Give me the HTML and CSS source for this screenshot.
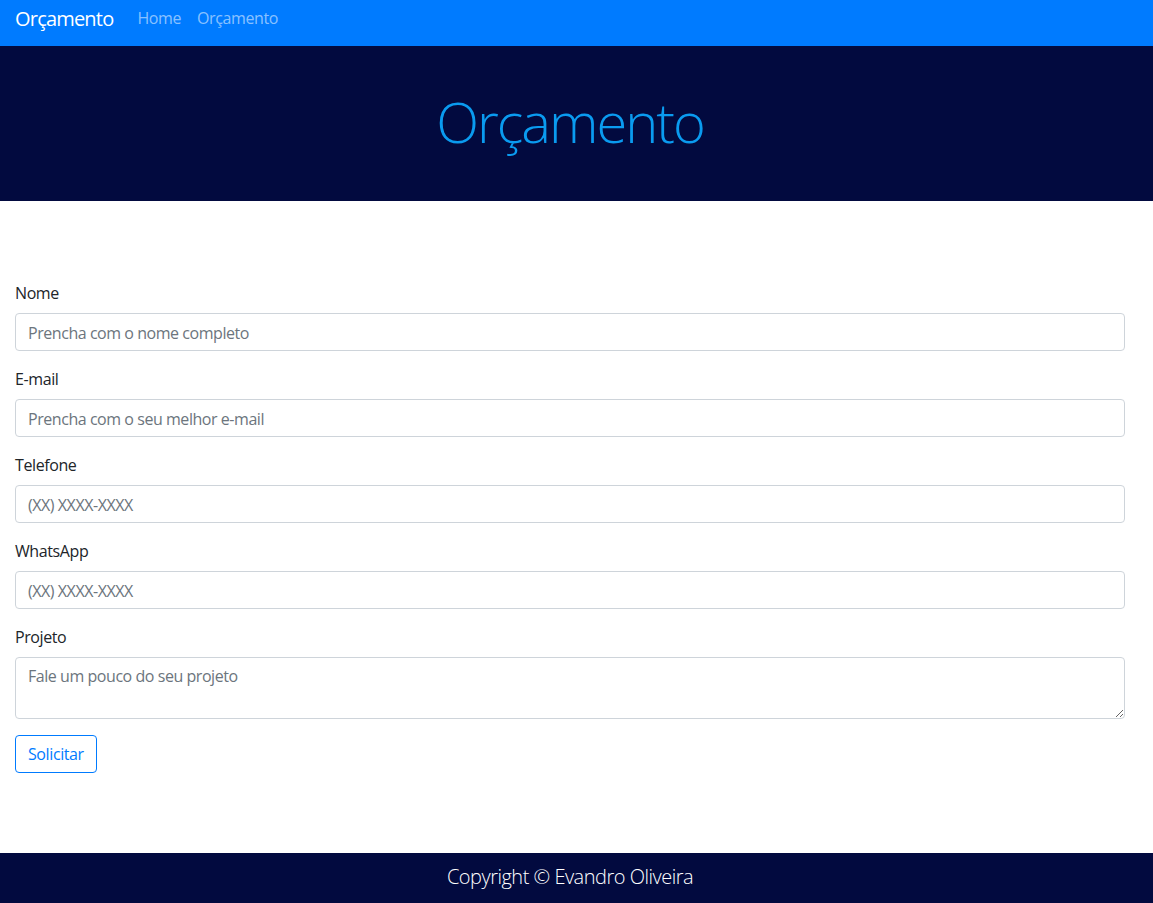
FILE: index.html
```html
<!DOCTYPE html>
<html lang="pt-br">
<head>
<meta charset="utf-8">
<title>Orçamento</title>
<link rel="stylesheet" href="styles.css">
</head>
<body>
<nav class="navbar">
  <a class="brand" href="#">Orçamento</a>
  <ul class="nav">
    <li><a href="#">Home</a></li>
    <li><a href="#">Orçamento</a></li>
  </ul>
</nav>
<header class="hero">
  <h1 class="hero-title">Orçamento</h1>
</header>
<main class="content">
  <form class="form">
    <div class="group">
      <label for="nome">Nome</label>
      <input class="control" id="nome" type="text" placeholder="Prencha com o nome completo">
    </div>
    <div class="group">
      <label for="email">E-mail</label>
      <input class="control" id="email" type="email" placeholder="Prencha com o seu melhor e-mail">
    </div>
    <div class="group">
      <label for="tel">Telefone</label>
      <input class="control" id="tel" type="text" placeholder="(XX) XXXX-XXXX">
    </div>
    <div class="group">
      <label for="wpp">WhatsApp</label>
      <input class="control" id="wpp" type="text" placeholder="(XX) XXXX-XXXX">
    </div>
    <div class="group">
      <label for="proj">Projeto</label>
      <textarea class="control area" id="proj" rows="2" placeholder="Fale um pouco do seu projeto"></textarea>
    </div>
    <button class="btn" type="button">Solicitar</button>
  </form>
</main>
<footer class="footer">Copyright © Evandro Oliveira</footer>
</body>
</html>
```
FILE: styles.css
```css
* { box-sizing: border-box; }
html, body { margin: 0; padding: 0; }
body {
  font-family: "Open Sans", "Noto Sans", Arial, sans-serif;
  font-size: 16px;
  line-height: 1.5;
  color: #212529;
  background: #fff;
  letter-spacing: -0.4px;
}
.navbar {
  display: flex;
  align-items: flex-start;
  height: 46px;
  padding: 4px 16px 0 15px;
  background: #007bff;
}
.brand {
  color: #fff;
  text-decoration: none;
  font-size: 20px;
  margin-right: 24px;
  line-height: 30px;
  letter-spacing: -0.8px;
}
.nav {
  display: flex;
  list-style: none;
  margin: 0;
  padding: 0;
  gap: 16px;
}
.nav a {
  color: rgba(255,255,255,.55);
  text-decoration: none;
  font-size: 16px;
  line-height: 28px;
}
.hero {
  background: #020a3f;
  height: 155px;
  display: flex;
  align-items: center;
  justify-content: center;
  padding: 0 13px 4px 0;
}
.hero-title {
  margin: 0;
  color: #0a9bf0;
  font-size: 56px;
  font-weight: 300;
  line-height: 1.2;
  letter-spacing: -2px;
}
.content {
  padding: 80px 0 80px 15px;
}
.form { width: 1110px; }
.group { margin-bottom: 16px; }
label {
  display: block;
  margin-bottom: 8px;
  line-height: 24px;
}
.control {
  display: block;
  width: 100%;
  height: 38px;
  padding: 7px 12px 5px;
  font-family: inherit;
  font-size: 16px;
  line-height: 24px;
  letter-spacing: -0.45px;
  color: #495057;
  border: 1px solid #ced4da;
  border-radius: 4px;
  background: #fff;
}
.control::placeholder { color: #6c757d; opacity: 1; }
.area { height: 62px; resize: vertical; padding-top: 6px; }
.btn {
  display: block;
  height: 38px;
  padding: 6px 12px;
  font-family: inherit;
  font-size: 16px;
  line-height: 24px;
  letter-spacing: -0.4px;
  color: #007bff;
  background: transparent;
  border: 1px solid #007bff;
  border-radius: 4px;
}
.footer {
  background: #020a3f;
  color: #fff;
  height: 50px;
  display: flex;
  align-items: center;
  justify-content: center;
  font-size: 20px;
  font-weight: 300;
  letter-spacing: -0.5px;
  padding: 0 13px 3px 0;
}
```
